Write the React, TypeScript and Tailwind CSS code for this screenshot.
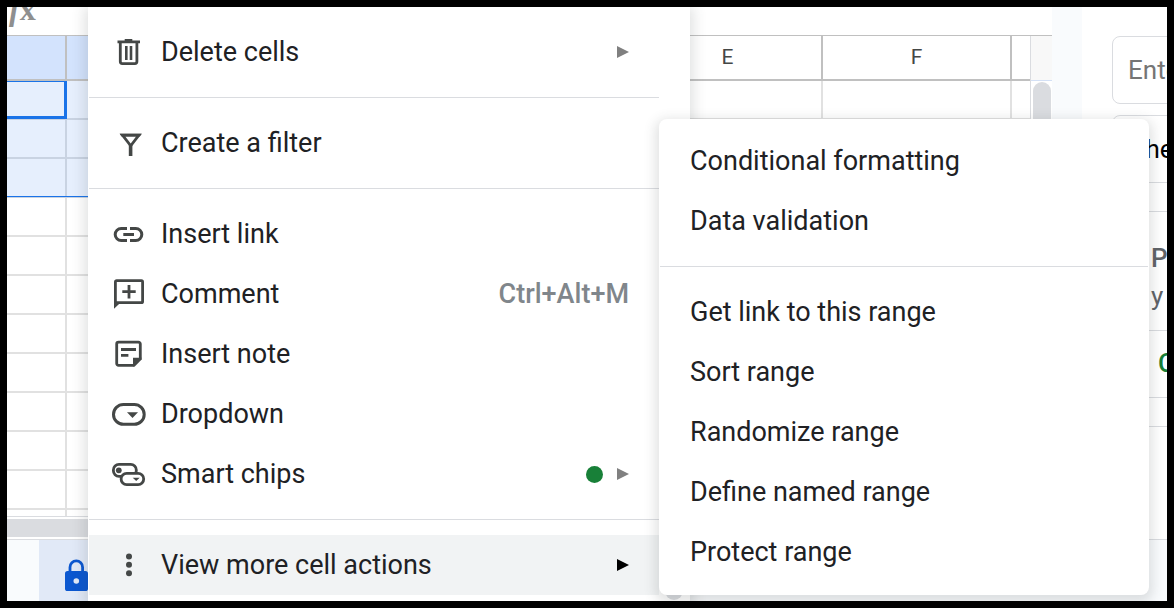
import type { ReactNode } from 'react';
import clsx from 'clsx';

interface MenuEntry {
  label: string;
  icon?: ReactNode;
  shortcut?: string;
  hasSubmenu?: boolean;
  isNew?: boolean;
  active?: boolean;
}

function Icon({ children }: { children: ReactNode }) {
  return (
    <svg
      viewBox="0 0 36 36"
      className="size-9 shrink-0"
      fill="none"
      stroke="#444746"
      strokeWidth="2.8"
      aria-hidden
    >
      {children}
    </svg>
  );
}

const TrashIcon = (
  <Icon>
    <path d="M6.5 6.5h7.2V5h7.6v1.5H29V9.2H6.5Z" fill="#444746" stroke="none" />
    <path d="M9.3 8v19.6a2 2 0 0 0 2 2h12.6a2 2 0 0 0 2-2V8" />
    <path d="M15.3 12v14M20 12v14" strokeWidth="2.6" />
  </Icon>
);

const FilterIcon = (
  <Icon>
    <path d="M11.5 10.1h16.4l-8.2 10.7Z" />
    <path d="M8.7 8.7h22l-1.8 2.8H10.5Z" fill="#444746" stroke="none" />
    <path d="M19.6 20v11" strokeWidth="3.6" />
  </Icon>
);

const LinkIcon = (
  <Icon>
    <path d="M16 12.5h-5.8a6 6 0 0 0 0 12H16M19 12.5h5.8a6 6 0 0 1 0 12H19M12.3 18.5H23" strokeWidth="3" />
  </Icon>
);

const CommentIcon = (
  <Icon>
    <rect x="4.4" y="4.7" width="27.2" height="22" rx="1.2" />
    <path d="M3 25v7.8L8.6 27.5Z" fill="#444746" stroke="none" />
    <path d="M18 9v13.4M11.3 15.7h13.4" />
  </Icon>
);

const NoteIcon = (
  <Icon>
    <path d="M29.3 22.5V7.9a1.8 1.8 0 0 0-1.8-1.8H7.5a1.8 1.8 0 0 0-1.8 1.8v19.6a1.8 1.8 0 0 0 1.8 1.8h15" />
    <path d="M22 21.7h8.7v1.8L23.5 30.7H22Z" fill="#444746" stroke="none" />
    <path d="M10 13.5h15M10 19.4h7.4" />
  </Icon>
);

const DropdownIcon = (
  <Icon>
    <rect x="2.5" y="8.5" width="30.7" height="19.8" rx="9.9" strokeWidth="3" />
    <path d="M16 16.3h11L21.5 22Z" fill="#444746" stroke="none" />
  </Icon>
);

const SmartChipIcon = (
  <Icon>
    <rect x="2.4" y="8.4" width="22.9" height="12" rx="5.6" />
    <circle cx="7.8" cy="14.3" r="2.9" fill="#444746" stroke="none" />
    <rect x="10.1" y="17.4" width="22.6" height="11.2" rx="5.6" fill="#fff" />
    <path d="M21.7 21.7h7L25.2 25Z" fill="#444746" stroke="none" />
  </Icon>
);

const MoreIcon = (
  <Icon>
    <g fill="#444746" stroke="none">
      <circle cx="18" cy="9.4" r="3" />
      <circle cx="18" cy="17.8" r="3" />
      <circle cx="18" cy="26.2" r="3" />
    </g>
  </Icon>
);

const CELL_MENU: MenuEntry[][] = [
  [{ label: 'Delete cells', icon: TrashIcon, hasSubmenu: true }],
  [{ label: 'Create a filter', icon: FilterIcon }],
  [
    { label: 'Insert link', icon: LinkIcon },
    { label: 'Comment', icon: CommentIcon, shortcut: 'Ctrl+Alt+M' },
    { label: 'Insert note', icon: NoteIcon },
    { label: 'Dropdown', icon: DropdownIcon },
    { label: 'Smart chips', icon: SmartChipIcon, hasSubmenu: true, isNew: true },
  ],
  [{ label: 'View more cell actions', icon: MoreIcon, hasSubmenu: true, active: true }],
];

const MORE_ACTIONS: MenuEntry[][] = [
  [{ label: 'Conditional formatting' }, { label: 'Data validation' }],
  [
    { label: 'Get link to this range' },
    { label: 'Sort range' },
    { label: 'Randomize range' },
    { label: 'Define named range' },
    { label: 'Protect range' },
  ],
];

const COLUMNS = ['', '', '', '', 'E', 'F', ''];
const ROWS = Array.from({ length: 12 }, (_, i) => i);

function MenuItem({ label, icon, shortcut, hasSubmenu, isNew, active }: MenuEntry) {
  return (
    <button
      type="button"
      role="menuitem"
      aria-haspopup={hasSubmenu ? 'menu' : undefined}
      className={clsx(
        'flex h-[60px] w-full items-center gap-3.5 pr-[30px] text-left text-[27px]/[42px] text-[#202124]',
        icon ? 'pl-[22px]' : 'pl-[30px]',
        active && 'bg-[#f1f3f4]',
      )}
    >
      {icon}
      <span className="flex-1 whitespace-nowrap">{label}</span>
      {shortcut && <span className="font-medium text-[#80868b]">{shortcut}</span>}
      {isNew && <span className="size-[17px] rounded-full bg-[#188038]" />}
      {hasSubmenu && (
        <svg viewBox="0 0 12 12" className="size-3" fill={active ? '#000' : '#808080'} aria-hidden>
          <path d="M0 0l12 6-12 6Z" />
        </svg>
      )}
    </button>
  );
}

function MenuGroups({ groups }: { groups: MenuEntry[][] }) {
  return groups.map((group, i) => (
    <div key={group[0].label} role="group">
      {i > 0 && <div role="separator" className="my-[15px] h-px bg-[#dadce0]" />}
      {group.map((entry) => (
        <MenuItem key={entry.label} {...entry} />
      ))}
    </div>
  ));
}

function Grid() {
  return (
    <div className="min-h-0 flex-1 overflow-hidden border-b border-[#dadce0]">
      <table className="w-full table-fixed border-separate border-spacing-0">
        <colgroup>
          <col className="w-[60px]" />
          <col className="w-[189px]" />
          <col className="w-[189px]" />
          <col className="w-[189px]" />
          <col className="w-[189px]" />
          <col className="w-[189px]" />
          <col />
        </colgroup>
        <thead>
          <tr>
            {COLUMNS.map((name, i) => (
              <th
                key={i}
                className={clsx(
                  'h-[45px] border-b-2 border-[#c0c0c0] p-0 text-[21px] font-normal text-[#444746]',
                  i < 6 && 'border-r-2',
                  i < 2 && 'bg-[#d3e3fd]',
                )}
              >
                {name}
              </th>
            ))}
          </tr>
        </thead>
        <tbody>
          {ROWS.map((row) => (
            <tr key={row}>
              {COLUMNS.map((_, i) => {
                const selected = row < 3 && i < 2;
                return (
                  <td
                    key={i}
                    className={clsx(
                      'relative h-[39px] border-b-2 p-0',
                      i < 6 && 'border-r-2',
                      selected ? 'border-[#c9d3e2] bg-[#e6effd]' : 'border-[#e1e1e1]',
                    )}
                  >
                    {row === 0 && i === 0 && (
                      <span className="absolute -right-0.5 -bottom-px left-0 top-0 border-t border-r-3 border-b-3 border-[#1a73e8]" />
                    )}
                    {row === 2 && selected && (
                      <span className="absolute -right-0.5 -bottom-px left-0 h-px bg-[#1a73e8]" />
                    )}
                  </td>
                );
              })}
            </tr>
          ))}
        </tbody>
      </table>
    </div>
  );
}

function Spreadsheet() {
  return (
    <main className="flex min-w-0 flex-1 flex-col bg-white">
      <div className="h-7 shrink-0 overflow-hidden pl-0.5">
        <span className="-mt-3 block font-['Liberation_Serif',serif] text-[32px]/7 font-bold text-[#8f8f8f]">
          <i>f</i>x
        </span>
      </div>
      <div className="flex min-h-0 flex-1 border-t border-[#c0c0c0]">
        <div className="flex min-w-0 flex-1 flex-col">
          <Grid />
        </div>
        <div className="flex w-[22px] flex-col border-l border-[#dadce0]">
          <div className="h-[45px] shrink-0 border-b border-[#d3e0f5] bg-[#f8f8f8]" />
          <div className="mt-px ml-0.5 h-80 w-[18px] rounded-full bg-[#dadce0]" />
        </div>
      </div>
      <div className="h-[22px] shrink-0 pt-0.5 pb-0.5">
        <div className="h-[18px] bg-[#dadce0]" />
      </div>
      <footer className="flex h-[62px] shrink-0 border-t border-[#dadce0] bg-[#f9fbfd] pl-8">
        <button
          type="button"
          aria-label="Protected sheet"
          className="flex w-60 items-center bg-[#e1e9f7] pt-2 pl-[26px]"
        >
          <svg viewBox="0 0 23 32" className="h-8 w-[23px]" aria-hidden>
            <path d="M5 13V8.2a6.3 6.3 0 0 1 12.6 0V13" fill="none" stroke="#0b57d0" strokeWidth="2.8" />
            <rect y="12" width="23" height="20" rx="2.6" fill="#0b57d0" />
            <circle cx="11.3" cy="22" r="2.8" fill="#e1e9f7" />
          </svg>
        </button>
      </footer>
    </main>
  );
}

function SidePanel() {
  return (
    <aside className="flex w-[85px] shrink-0 flex-col overflow-hidden bg-white text-[26px]">
      <div className="shrink-0 pt-[29px] pl-[30px]">
        <input
          aria-label="Description"
          placeholder="Enter a description"
          className="block h-[68px] w-[400px] rounded-lg border border-[#dadce0] pl-[15px] placeholder:text-[#757575]"
        />
        <input
          aria-label="Range"
          defaultValue="Sheet1"
          className="mt-[11px] block h-[68px] w-[400px] rounded-lg border border-[#dadce0] pl-[17px] text-black"
        />
      </div>
      <div className="mt-7 h-[120px] shrink-0 border-y border-[#dadce0] pt-[26px] pl-[69px] text-[#5f6368]">
        <p className="text-[26px]/10 font-medium">P</p>
        <p className="text-[26px]/9">y</p>
      </div>
      <div className="flex h-[67px] shrink-0 items-center border-b border-[#dadce0] pb-0.5 pl-[76px] font-medium text-[#188038]">
        C
      </div>
      <div className="h-[29px] shrink-0 border-b border-[#dadce0]" />
      <div className="flex-1" />
      <div className="h-[62px] shrink-0 border-t border-[#dadce0] bg-[#f9fbfd]" />
    </aside>
  );
}

export default function App() {
  return (
    <div className="h-screen bg-black p-[7px] font-[Roboto,sans-serif]">
      <div className="relative flex h-full overflow-hidden">
        <Spreadsheet />
        <div className="w-[30px] shrink-0 bg-[#f9fbfd]" />
        <SidePanel />

        <div
          role="menu"
          aria-label="Cell actions"
          className="absolute inset-y-0 left-[81px] flex w-[602px] border-x border-transparent bg-white shadow-[0_4px_12px_4px_rgba(60,64,67,0.15)]"
        >
          <div className="flex-1 pt-[15px]">
            <MenuGroups groups={CELL_MENU} />
          </div>
          <div className="flex w-[30px] flex-col items-center justify-end pb-px">
            <div className="h-80 w-[18px] rounded-full bg-[#dadce0]" />
          </div>
        </div>

        <div
          role="menu"
          aria-label="View more cell actions"
          className="absolute top-28 left-[652px] w-[490px] rounded-lg border-x border-transparent bg-white pt-3 pb-[13px] shadow-[0_4px_12px_4px_rgba(60,64,67,0.15)]"
        >
          <MenuGroups groups={MORE_ACTIONS} />
        </div>
      </div>
    </div>
  );
}
